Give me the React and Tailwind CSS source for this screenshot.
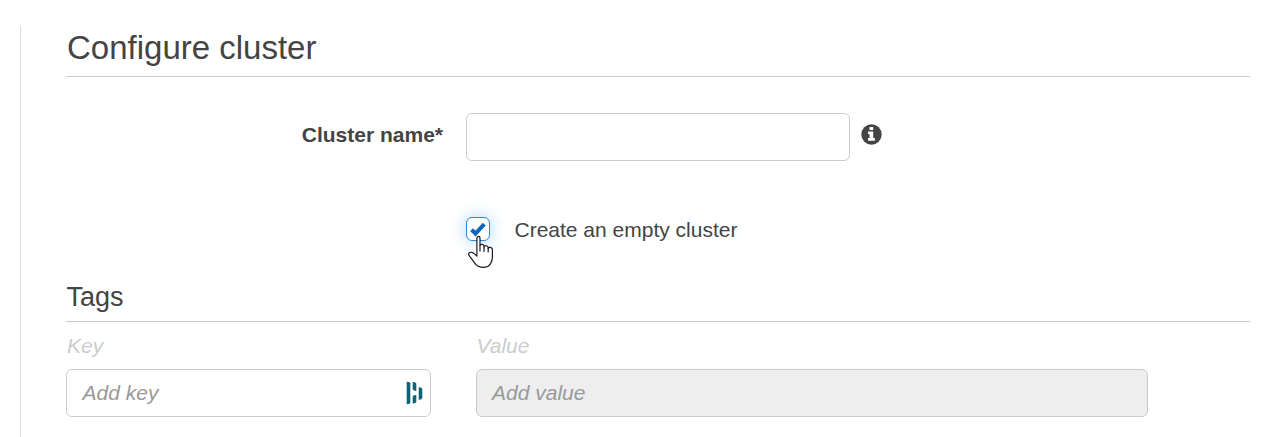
import React from "react";

function InfoIcon() {
  return (
    <svg className="ml-[11px] mt-[11px]" width="21" height="21" viewBox="0 0 21 21" aria-label="Info">
      <circle cx="10.5" cy="10.5" r="10.2" fill="#444" />
      <path d="M8.5 3.1 H12.2 V6 H8.5 Z M7.1 7.6 H12.2 V14.1 H13.9 V16.8 H7.1 V14.1 H8.6 V10.2 H7.1 Z" fill="#fff" />
    </svg>
  );
}

function PasswordManagerIcon() {
  return (
    <svg width="18" height="24" viewBox="0 0 18 24" fill="#0e6377" aria-hidden="true">
      <path d="M.7 .8 L3.2 .9 L4.3 2.2 V21.8 L3.2 23 L.7 23.2 Z" />
      <path d="M6.7 1 L9 1.2 L10.3 2.6 V9.9 L8 9.5 L6.7 8.2 Z" />
      <path d="M6.7 15.4 L8 14.2 L10.3 14 V21 L9 22.3 L6.7 22.5 Z" />
      <path d="M12.7 6.3 L15 6.6 L16.3 7.9 V17 L15 18.5 L12.7 18.7 Z" />
    </svg>
  );
}

function HandCursor() {
  return (
    <svg className="absolute left-0 top-[18px]" width="28" height="34" viewBox="0 0 28 34" aria-hidden="true">
      <path
        d="M10.9 21.2 V3.1 C10.9 0.8 14 0.8 14 3.1 V10.6 C14.5 8.8 18 9 18 11.2 V12 C18.5 10 22.2 10.4 22.2 12.8 V13.4 C22.8 11.6 26.4 12.2 26.4 14.8 V22.5 C26.4 25 25.5 27 24.6 28.6 C23 31.2 20.4 32.4 17.4 32.4 C13 32.4 10.4 30.6 8.3 27.6 L2.9 20.2 C1.8 18.2 4 16.8 6 17.4 C8 17.9 9.4 19.8 10.9 21.2 Z"
        fill="#fff"
        stroke="#1b1b24"
        strokeWidth="1.2"
        strokeLinejoin="round"
      />
      <path d="M14 10.5 V16 M18 12 V16.5 M22.2 13 V17" stroke="#1b1b24" strokeWidth="1.2" strokeLinecap="round" />
    </svg>
  );
}

export default function App() {
  return (
    <div className="h-[437px] overflow-hidden bg-white pl-5 pt-[26px] font-['Liberation_Sans',Arial,sans-serif] text-[21px] text-[#444]">
      <main className="h-[411px] border-l border-[#ddd] pl-[45px] pr-6">
        <h1 className="h-[51px] border-b border-[#ccc] pl-px text-[33px] leading-[43px]">Configure cluster</h1>

        <div className="flex pt-9">
          <label htmlFor="name" className="w-[377px] text-right font-bold leading-[44px]">Cluster name*</label>
          <input id="name" className="ml-[23px] h-12 w-96 rounded-md border border-[#ccc] px-4 outline-none" />
          <InfoIcon />
        </div>

        <div className="flex pl-[400px] pt-14">
          <div className="relative size-6">
            <span className="flex size-6 items-center justify-center rounded-md border border-[#2b87dd] bg-white shadow-[0_0_15px_1px_rgba(82,168,236,0.4)]">
              <svg width="22" height="22" viewBox="0 0 22 22" fill="none" aria-hidden="true">
                <path d="M4.6 11.6 L8.5 15.6 L17.3 6.2" stroke="#1166bb" strokeWidth="4.1" />
              </svg>
            </span>
            <HandCursor />
          </div>
          <span className="pl-[24.5px] leading-[26px]">Create an empty cluster</span>
        </div>

        <h2 className="mt-[35px] h-[44px] border-b border-[#ccc] pl-[0.5px] text-[27px] leading-[38px]">Tags</h2>

        <div className="flex gap-[45px] italic">
          <div className="w-[365px]">
            <div className="h-[47px] pl-px leading-[48px] text-[#ccc]">Key</div>
            <div className="flex h-12 items-center justify-between rounded-md border border-[#ccc] pl-[15.5px] pr-[6px] text-[#999]">
              <span>Add key</span>
              <PasswordManagerIcon />
            </div>
          </div>
          <div className="w-[672px]">
            <div className="h-[47px] pl-[0.5px] leading-[48px] text-[#ccc]">Value</div>
            <div className="flex h-12 items-center rounded-md border border-[#ccc] bg-[#eee] pl-[15px] text-[#999]">Add value</div>
          </div>
        </div>
      </main>
    </div>
  );
}
